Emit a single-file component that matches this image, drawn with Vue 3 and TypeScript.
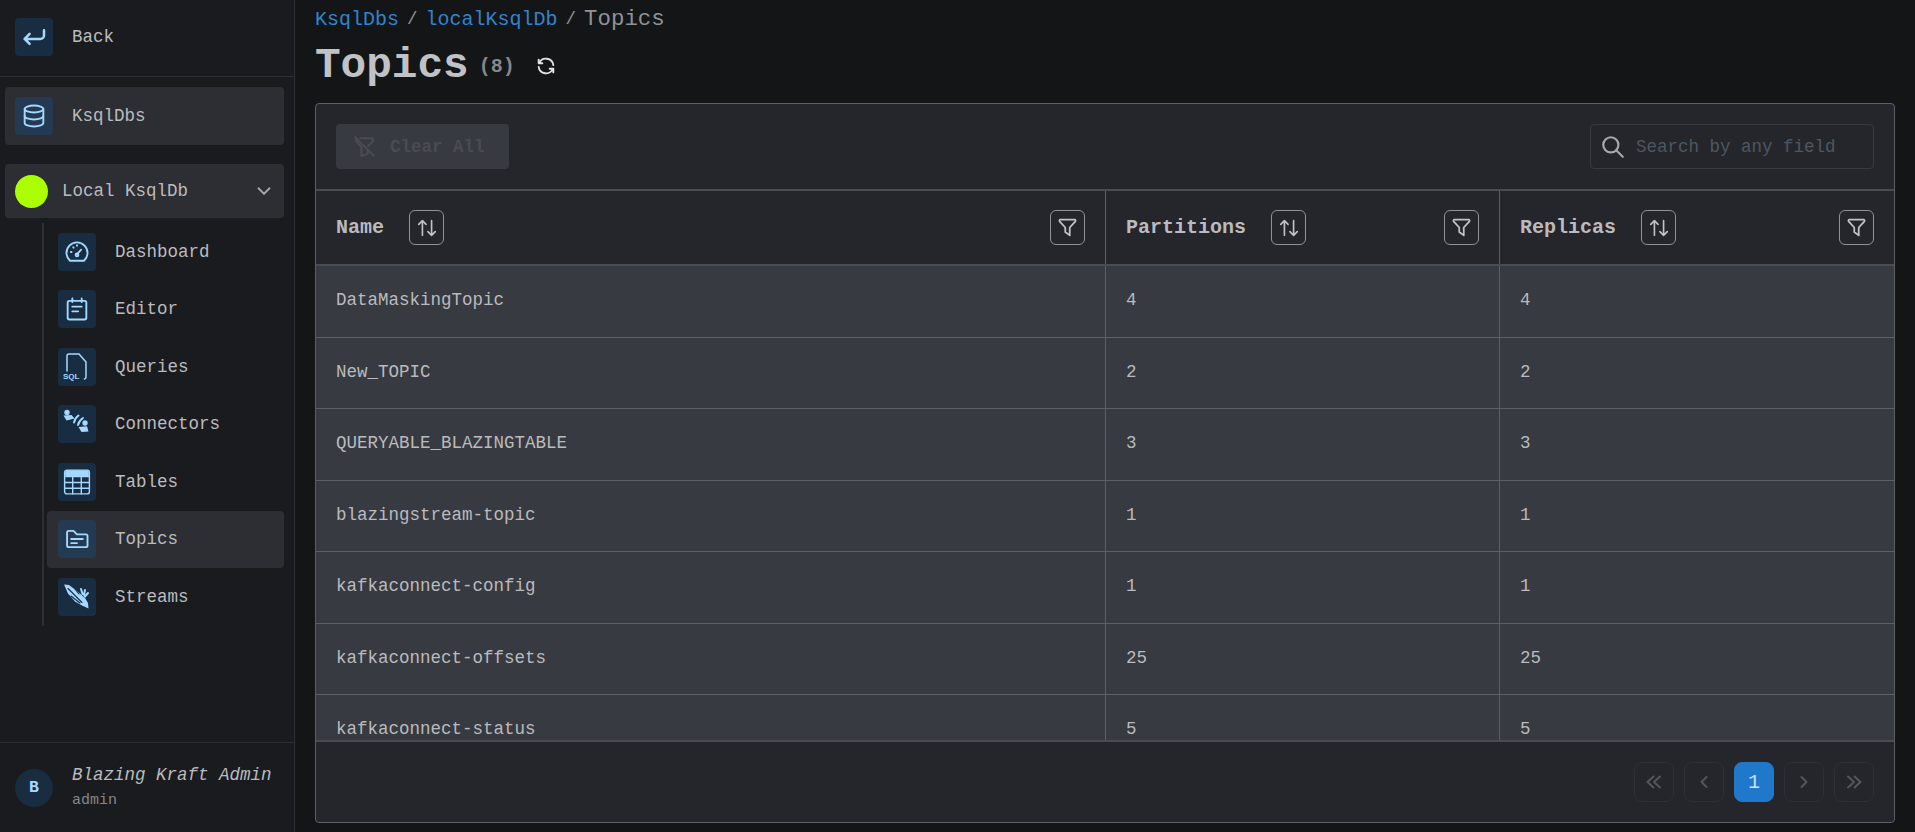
<script setup lang="ts">
interface Row { name: string; partitions: number; replicas: number }
const rows: Row[] = [
  { name: 'DataMaskingTopic', partitions: 4, replicas: 4 },
  { name: 'New_TOPIC', partitions: 2, replicas: 2 },
  { name: 'QUERYABLE_BLAZINGTABLE', partitions: 3, replicas: 3 },
  { name: 'blazingstream-topic', partitions: 1, replicas: 1 },
  { name: 'kafkaconnect-config', partitions: 1, replicas: 1 },
  { name: 'kafkaconnect-offsets', partitions: 25, replicas: 25 },
  { name: 'kafkaconnect-status', partitions: 5, replicas: 5 },
]
const columns = ['Name', 'Partitions', 'Replicas']
const navItems = ['Dashboard', 'Editor', 'Queries', 'Connectors', 'Tables', 'Topics', 'Streams']
</script>

<template>
  <div class="app">
    <aside class="sidebar">
      <div class="back">
        <span class="ico">
          <svg viewBox="0 0 24 24" class="i30 thick"><path d="M20 6.500v4a3 3 0 0 1-3 3H4.500l4-4m-4 4l4 4" /></svg>
        </span>
        <span class="label">Back</span>
      </div>
      <div class="root-item">
        <span class="ico">
          <svg viewBox="0 0 24 24" class="i28"><path d="M12 6m-8 0a8 3 0 1 0 16 0a8 3 0 1 0-16 0" /><path d="M4 6v6a8 3 0 0 0 16 0v-6" /><path d="M4 12v6a8 3 0 0 0 16 0v-6" /></svg>
        </span>
        <span class="label">KsqlDbs</span>
      </div>
      <div class="cluster">
        <span class="dot"></span>
        <span class="cluster-name">Local KsqlDb</span>
        <svg viewBox="0 0 24 24" class="chev"><path d="M6 9l6 6l6-6" /></svg>
      </div>
      <nav class="sub">
        <div v-for="item in navItems" :key="item" class="sub-item" :class="{ active: item === 'Topics' }">
          <span class="ico">
            <svg v-if="item === 'Dashboard'" viewBox="0 0 24 24" class="i28"><path d="M6 19.500a9 9 0 1 1 12 0z" /><path d="M12 14l3.500-4" /><circle cx="12" cy="14.500" r="1.200" /><path d="M6.800 12h.5M8.800 8l.3.4M12 6.200v.5" /></svg>
            <svg v-else-if="item === 'Editor'" viewBox="0 0 24 24" class="i28"><rect x="4" y="5" width="16" height="16" rx="1.500" /><path d="M8 3v3M16 3v3M8 10h8M8 14h5" /></svg>
            <svg v-else-if="item === 'Queries'" viewBox="0 0 38 38" class="i38">
              <path d="M9 23V8a2 2 0 0 1 2-2h10l7 8v15a2 2 0 0 1-1.500 2" />
              <text x="5" y="31" class="sql">SQL</text>
            </svg>
            <svg v-else-if="item === 'Connectors'" viewBox="3 3 38 38" class="i38">
              <circle cx="12" cy="10.500" r="2.700" class="solid" />
              <path d="M8.500 13.500l8-.5 3 3.500-8 2z" class="solid" />
              <path d="M19 20.500q1-4.500 4.500-7M23 23q1-4.500 5-7" class="arc" />
              <circle cx="30" cy="21" r="2.700" class="solid" />
              <path d="M23.500 25l8.500-.8 1.500 5.300-7 .5z" class="solid" />
            </svg>
            <svg v-else-if="item === 'Tables'" viewBox="0 0 26 26" class="i28 table"><rect x="1.500" y="2" width="23" height="22" rx="2" /><path d="M2 3.500A1.500 1.500 0 0 1 3.500 2h19A1.500 1.500 0 0 1 24 3.500V8.500H2z" class="solid" /><path d="M1.500 13.500h23M1.500 18.800h23M9 8.500v15.500M17 8.500v15.500" /></svg>
            <svg v-else-if="item === 'Topics'" viewBox="0 0 24 24" class="i28"><path d="M3.500 6.500A1.500 1.500 0 0 1 5 5h4l3 3h7.500A1.500 1.500 0 0 1 21 9.500v8a1.500 1.500 0 0 1-1.500 1.500H5a1.500 1.500 0 0 1-1.500-1.500z" /><path d="M7 12h10M7 15.500h5" /></svg>
            <svg v-else viewBox="3 3 38 38" class="i38">
              <path d="M9 9.500l5 .5 8 6 8 7 3 5 .5 5.500-6.500-3-7-4-7-8z" class="solid" />
              <path d="M13 13.500l14 14M16 21l9 7M20 14l4 5" class="slit" />
              <path d="M26 14l1.500 5M30 15l-1 5M33 18l-3 3.500" class="arc" />
            </svg>
          </span>
          <span class="label">{{ item }}</span>
        </div>
      </nav>
      <div class="user">
        <span class="avatar">B</span>
        <div class="user-text">
          <div class="user-name">Blazing Kraft Admin</div>
          <div class="user-role">admin</div>
        </div>
      </div>
    </aside>

    <main class="main">
      <div class="crumbs">
        <a class="crumb-link">KsqlDbs</a>
        <span class="sep">/</span>
        <a class="crumb-link">localKsqlDb</a>
        <span class="sep">/</span>
        <span class="crumb-current">Topics</span>
      </div>
      <div class="title-row">
        <h1 class="title">Topics</h1>
        <span class="count">(8)</span>
        <svg viewBox="0 0 24 24" class="refresh"><path d="M20 11a8.100 8.100 0 0 0-15.500-2m-.5-4v4h4" /><path d="M4 13a8.100 8.100 0 0 0 15.500 2m.5 4v-4h-4" /></svg>
      </div>
      <section class="card">
        <div class="toolbar">
          <button class="clear" type="button">
            <svg viewBox="0 0 24 24" class="clear-icon"><path d="M8 4h12v2.172a2 2 0 0 1-.586 1.414l-3.914 3.914m-.5 3.500v4l-6 2v-8.500l-4.480-4.928a2 2 0 0 1-.520-1.345v-2.227" /><path d="M3 3l18 18" /></svg>
            Clear All
          </button>
          <div class="search">
            <svg viewBox="0 0 24 24" class="search-icon"><path d="M10 10m-7 0a7 7 0 1 0 14 0a7 7 0 1 0-14 0" /><path d="M21 21l-6-6" /></svg>
            <span class="placeholder">Search by any field</span>
          </div>
        </div>
        <div class="grid-row head">
          <div v-for="col in columns" :key="col" class="cell head-cell">
            <span class="head-label">{{ col }}</span>
            <span class="tool sort"><svg viewBox="0 0 24 24"><path d="M3 8l4-4l4 4M7 4v16" /><path d="M21 16l-4 4l-4-4M17 20V4" /></svg></span>
            <span class="tool filter"><svg viewBox="0 0 24 24"><path d="M5.500 5h13a1 1 0 0 1 .5 1.500l-5 5.500v7l-4-3v-4l-5-5.500a1 1 0 0 1 .5-1.500" /></svg></span>
          </div>
        </div>
        <div class="body">
          <div v-for="row in rows" :key="row.name" class="grid-row data">
            <div class="cell">{{ row.name }}</div>
            <div class="cell">{{ row.partitions }}</div>
            <div class="cell">{{ row.replicas }}</div>
          </div>
        </div>
        <div class="footer">
          <span class="page"><svg viewBox="0 0 20 20"><path d="M9.500 4.500l-6 5.500l6 5.500" /><path d="M16 4.500l-6 5.500l6 5.500" /></svg></span>
          <span class="page"><svg viewBox="0 0 20 20"><path d="M12.500 5l-5 5l5 5" /></svg></span>
          <span class="page current">1</span>
          <span class="page"><svg viewBox="0 0 20 20"><path d="M7.500 5l5 5l-5 5" /></svg></span>
          <span class="page"><svg viewBox="0 0 20 20"><path d="M4 4.500l6 5.500l-6 5.500" /><path d="M10.500 4.500l6 5.500l-6 5.500" /></svg></span>
        </div>
      </section>
    </main>
  </div>
</template>

<style>
html, body { margin: 0; background: #141517; }
</style>

<style scoped>
.app {
  display: flex;
  width: 1915px;
  height: 832px;
  overflow: hidden;
  background: #141517;
  color: #babbbe;
  font-family: "Liberation Mono", monospace;
  font-size: 17.5px;
}
svg { fill: none; stroke: currentColor; stroke-width: 2; stroke-linecap: round; stroke-linejoin: round; display: block; }
.sidebar {
  width: 295px;
  flex: none;
  box-sizing: border-box;
  background: #1a1b1e;
  border-right: 1px solid #2c2e33;
  display: flex;
  flex-direction: column;
}
.ico {
  width: 38px;
  height: 38px;
  flex: none;
  border-radius: 4px;
  background: #182d42;
  color: #a5d8ff;
  display: flex;
  align-items: center;
  justify-content: center;
}
.i28 { width: 28px; height: 28px; stroke-width: 1.6; }
.i30 { width: 30px; height: 30px; stroke-width: 1.4; }
.i38 { width: 38px; height: 38px; stroke-width: 1.5; }
.thick { stroke-width: 2; }
.table { stroke-width: 1.3; }
.solid { fill: currentColor; stroke: none; }
.arc { stroke-width: 2; }
.slit { stroke: #182d42; stroke-width: 1.1; }
.sql { font-family: "Liberation Sans", sans-serif; font-size: 8px; font-weight: 700; fill: currentColor; stroke: none; }
.label { margin-left: 19px; }
.back {
  height: 77px;
  box-sizing: border-box;
  border-bottom: 1px solid #2c2e33;
  padding: 0 15px 3px;
  display: flex;
  align-items: center;
}
.root-item {
  margin: 10px 10px 0 5px;
  height: 58px;
  box-sizing: border-box;
  border-radius: 4px;
  background: #2c2e33;
  padding: 0 10px;
  display: flex;
  align-items: center;
}
.root-item .ico, .sub-item.active .ico { background: #233a52; }
.cluster {
  margin: 19px 10px 0 5px;
  height: 54px;
  box-sizing: border-box;
  border-radius: 4px;
  background: #2c2e33;
  padding: 0 10px;
  display: flex;
  align-items: center;
}
.dot { width: 33px; height: 33px; border-radius: 50%; background: #aaff00; flex: none; }
.cluster-name { margin-left: 14px; flex: 1; }
.chev { width: 22px; height: 22px; margin-right: -1px; color: #a6a7ab; stroke-width: 2; }
.sub {
  margin: 5px 10px 0 42px;
  border-left: 2px solid #2c2e33;
  padding-left: 3px;
}
.sub-item {
  height: 57.500px;
  box-sizing: border-box;
  padding: 0 11px;
  border-radius: 4px;
  display: flex;
  align-items: center;
}
.sub-item.active { background: #2c2e33; }
.user {
  margin-top: auto;
  height: 90px;
  box-sizing: border-box;
  border-top: 1px solid #2c2e33;
  padding: 0 15px;
  display: flex;
  align-items: center;
}
.avatar {
  width: 38px;
  height: 38px;
  border-radius: 50%;
  background: #182d42;
  color: #a5d8ff;
  font-size: 16.500px;
  font-weight: 700;
  flex: none;
  display: flex;
  align-items: center;
  justify-content: center;
}
.user-text { margin-left: 19px; }
.user-name { font-style: italic; line-height: 24px; }
.user-role { font-size: 15px; line-height: 24px; margin-top: 2px; color: #85878b; }
.main {
  flex: 1;
  min-width: 0;
  box-sizing: border-box;
  padding: 0 20px 9px;
  display: flex;
  flex-direction: column;
}
.crumbs { height: 38px; display: flex; align-items: center; }
.crumb-link { color: #2f84cf; font-size: 20px; }
.sep { color: #909296; font-size: 17.500px; margin: 0 8px; }
.crumb-current { color: #909296; font-size: 22.400px; }
.title-row { height: 65px; box-sizing: border-box; padding-bottom: 8px; display: flex; align-items: center; }
.title { margin: 0; font-size: 42.700px; font-weight: 700; line-height: 1; color: #c1c2c5; }
.count { margin-left: 10px; font-size: 20px; font-weight: 700; color: #85878b; }
.refresh { width: 22px; height: 22px; margin-left: 20px; margin-bottom: 2px; color: #e3e3e6; }
.card {
  flex: 1;
  min-height: 0;
  border: 1px solid #5c5f66;
  border-radius: 4px;
  background: #25262b;
  display: flex;
  flex-direction: column;
  overflow: hidden;
}
.toolbar {
  height: 87px;
  flex: none;
  box-sizing: border-box;
  border-bottom: 2px solid #4a4c53;
  padding: 0 20px;
  display: flex;
  align-items: center;
  justify-content: space-between;
}
.clear {
  width: 173px;
  height: 45px;
  border: 0;
  border-radius: 4px;
  background: #373a40;
  color: #4a4c52;
  font: 700 17.500px "Liberation Mono", monospace;
  display: flex;
  align-items: center;
  padding: 0 0 0 16px;
}
.clear-icon { width: 25px; height: 25px; margin-right: 13px; flex: none; }
.search {
  width: 284px;
  height: 45px;
  box-sizing: border-box;
  border: 1px solid #373a40;
  border-radius: 4px;
  display: flex;
  align-items: center;
  padding-left: 9px;
}
.search-icon { width: 26px; height: 26px; color: #a6a7ab; flex: none; }
.placeholder { margin-left: 10px; color: #4e5662; }
.grid-row { display: grid; grid-template-columns: 789px 394px 1fr; }
.cell {
  box-sizing: border-box;
  padding: 0 20px;
  display: flex;
  align-items: center;
  border-left: 1px solid #5c5f66;
}
.cell:first-child { border-left: 0; }
.head { height: 75px; flex: none; border-bottom: 2px solid #4a4c53; box-sizing: border-box; }
.head-label { font-size: 20px; font-weight: 700; }
.tool {
  width: 35px;
  height: 35px;
  box-sizing: border-box;
  border: 1.500px solid #909296;
  border-radius: 6px;
  color: #c1c2c5;
  display: flex;
  align-items: center;
  justify-content: center;
  flex: none;
}
.tool svg { stroke-width: 1.800; }
.sort svg { width: 22px; height: 22px; }
.filter svg { width: 27px; height: 27px; stroke-width: 1.600; }
.sort { margin-left: 25px; }
.filter { margin-left: auto; }
.body { flex: 1; min-height: 0; overflow: hidden; background: #373a40; }
.data { height: 71.500px; box-sizing: border-box; border-bottom: 1px solid #5c5f66; }
.data .cell { padding-bottom: 2px; }
.footer {
  height: 82px;
  flex: none;
  box-sizing: border-box;
  border-top: 2px solid #4a4c53;
  padding: 0 20px 0 0;
  display: flex;
  align-items: center;
  justify-content: flex-end;
  gap: 10px;
}
.page {
  width: 40px;
  height: 40px;
  box-sizing: border-box;
  border: 1px solid #2f3035;
  border-radius: 8px;
  color: #54565c;
  display: flex;
  align-items: center;
  justify-content: center;
}
.page svg { width: 20px; height: 20px; stroke-width: 2; }
.page.current { background: #1f78c9; border-color: #1f78c9; color: #c8e1f5; font-size: 20px; }
</style>
